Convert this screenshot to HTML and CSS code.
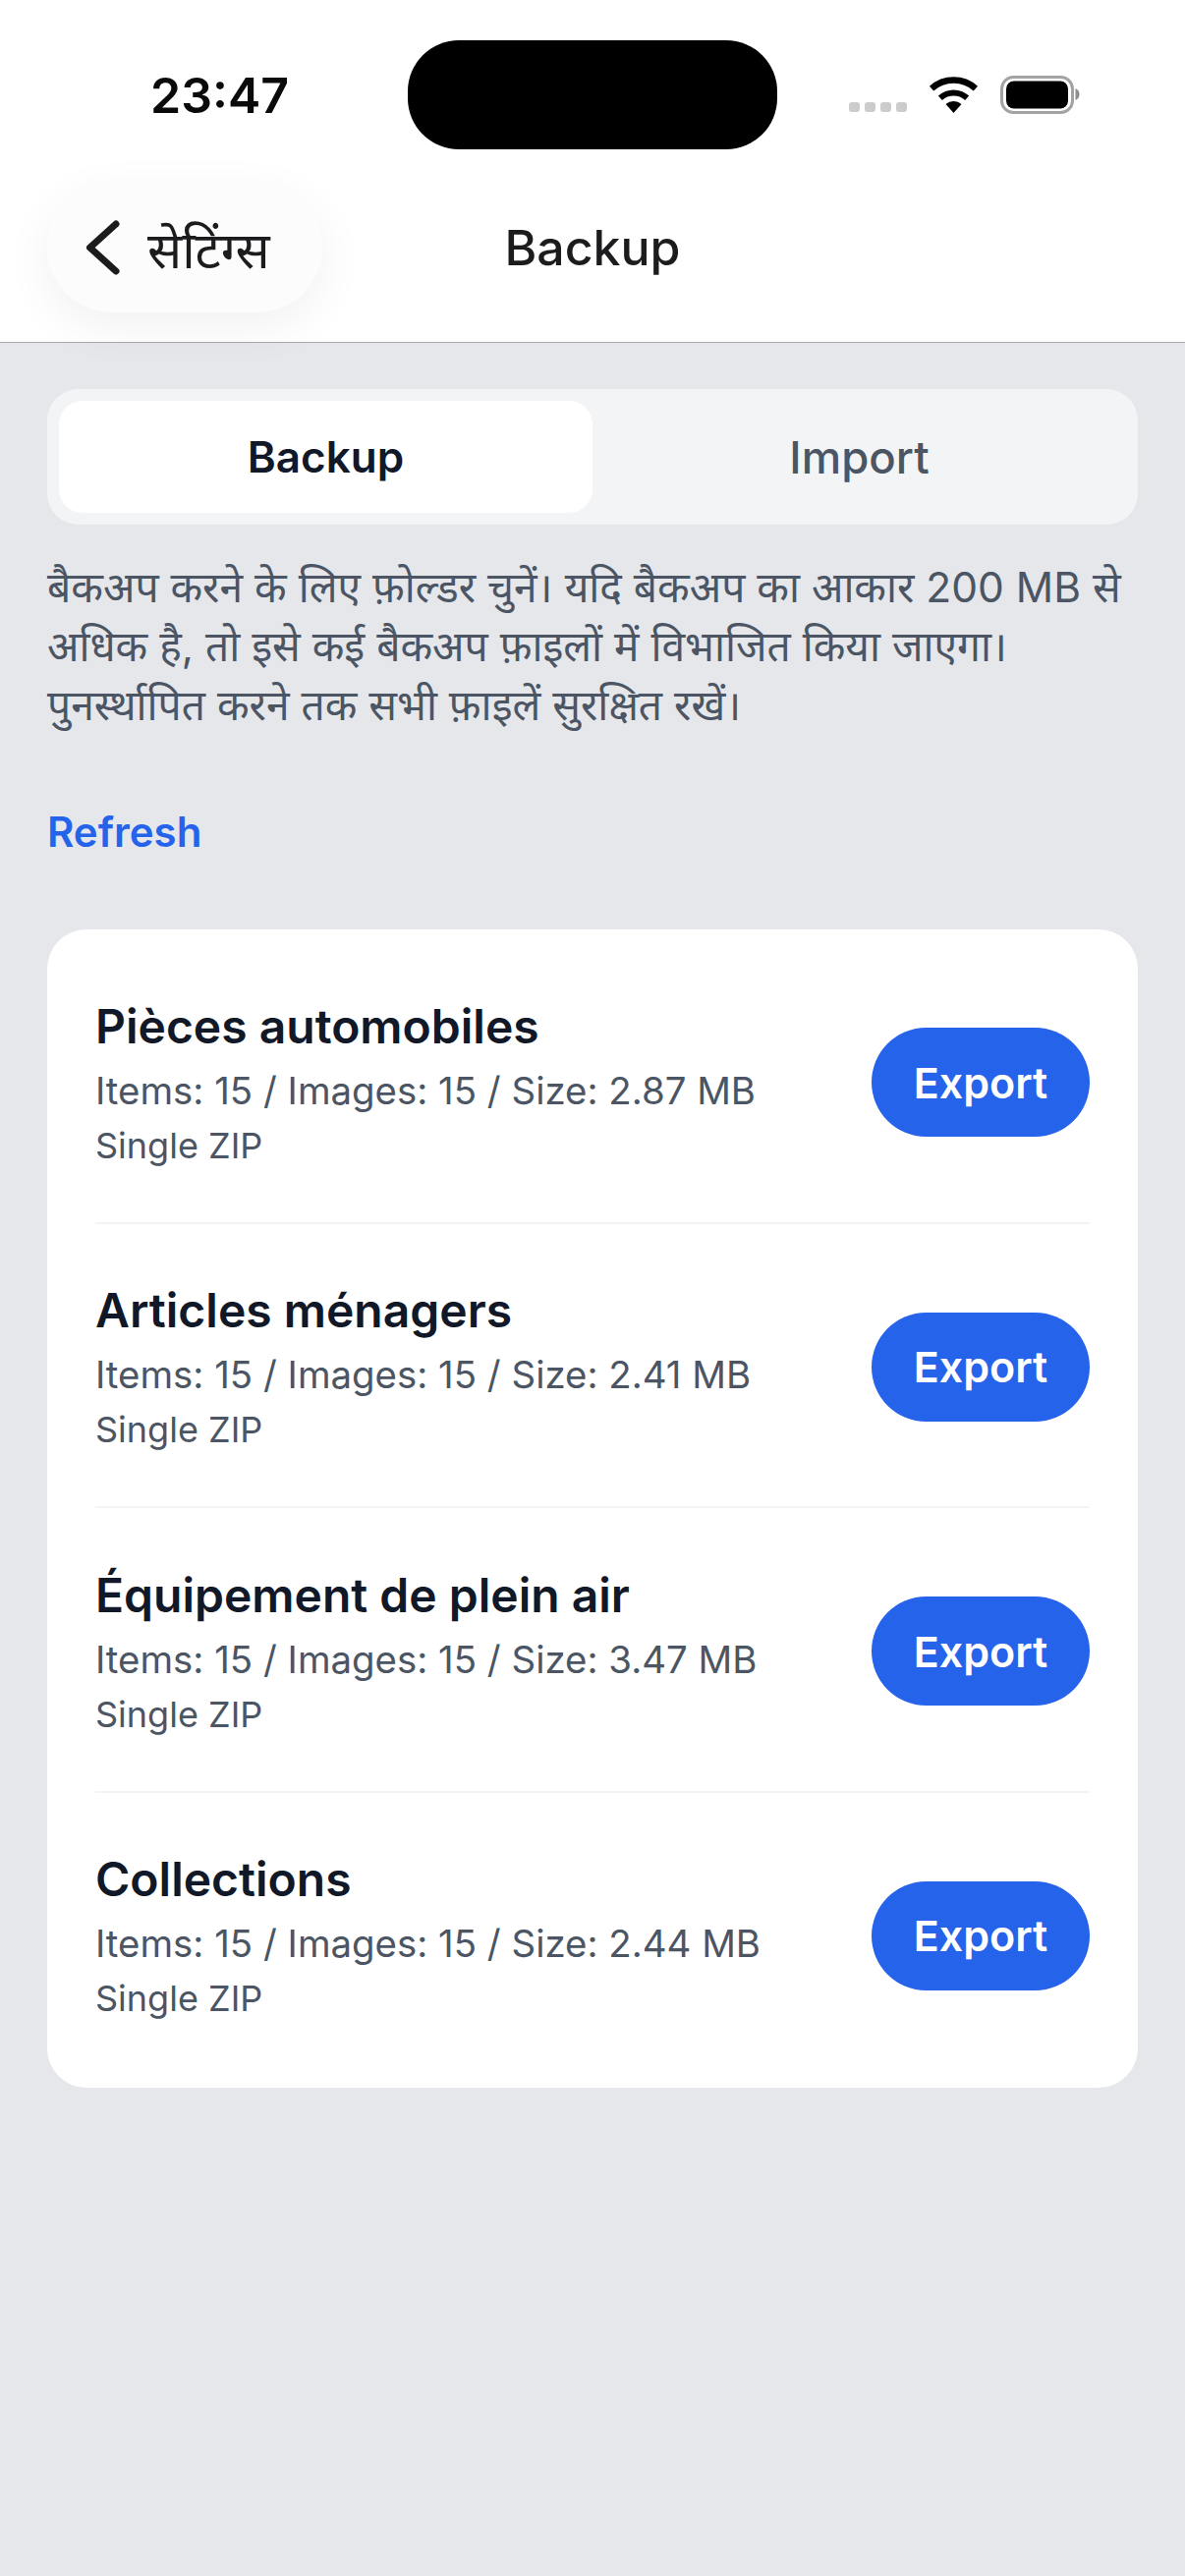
FILE: index.html
```html
<!DOCTYPE html>
<html lang="hi">
<head>
    <meta charset="UTF-8">
    <meta name="viewport" content="width=device-width, initial-scale=1.0">
    <title>Backup</title>
    <link rel="stylesheet" href="styles.css">
</head>
<body>
    <main>
        <header class="top">
            <div class="status-bar">
                <span class="time">23:47</span>
                <div class="island"></div>
                <div class="status-icons">
                    <div class="signal"><i></i><i></i><i></i><i></i></div>
                    <svg class="wifi" width="51" height="38" viewBox="0 0 51 38">
                        <path d="M3.1 12.1A33.5 33.5 0 0 1 47.9 12.1" fill="none" stroke="#000" stroke-width="6.5"/>
                        <path d="M11.85 21.8A20.4 20.4 0 0 1 39.15 21.8" fill="none" stroke="#000" stroke-width="6"/>
                        <path d="M25.5 37L17.5 28.1A12 12 0 0 1 33.5 28.1Z"/>
                    </svg>
                    <svg class="battery" width="82" height="39" viewBox="0 0 82 39">
                        <rect x="1.5" y="1.5" width="72" height="36" rx="12" fill="none" stroke="#a3a3a3" stroke-width="3"/>
                        <rect x="6" y="5.5" width="63" height="28" rx="8"/>
                        <path d="M76.5 13A6.5 6.5 0 0 1 76.5 25Z" fill="#8e8e8e"/>
                    </svg>
                </div>
            </div>
            <nav class="nav-bar">
                <button class="back">
                    <svg width="36" height="58" viewBox="0 0 36 58">
                        <path d="M30 5L3.5 29L30 53" fill="none" stroke="#1c1c1e" stroke-width="7" stroke-linecap="round" stroke-linejoin="round"/>
                    </svg>
                    <span>सेटिंग्स</span>
                </button>
                <h1>Backup</h1>
                <span></span>
            </nav>
        </header>

        <section class="content">
            <div class="tabs">
                <div class="tab active">Backup</div>
                <div class="tab">Import</div>
            </div>
            <p class="hint">बैकअप करने के लिए फ़ोल्डर चुनें। यदि बैकअप का आकार 200 MB से अधिक है, तो इसे कई बैकअप फ़ाइलों में विभाजित किया जाएगा। पुनर्स्थापित करने तक सभी फ़ाइलें सुरक्षित रखें।</p>
            <a class="refresh">Refresh</a>

            <div class="card">
                <div class="row">
                    <div class="info">
                        <h2>Pièces automobiles</h2>
                        <p class="meta">Items: 15 / Images: 15 / Size: 2.87 MB</p>
                        <p class="kind">Single ZIP</p>
                    </div>
                    <button class="export">Export</button>
                </div>
                <div class="row">
                    <div class="info">
                        <h2>Articles ménagers</h2>
                        <p class="meta">Items: 15 / Images: 15 / Size: 2.41 MB</p>
                        <p class="kind">Single ZIP</p>
                    </div>
                    <button class="export">Export</button>
                </div>
                <div class="row">
                    <div class="info">
                        <h2>Équipement de plein air</h2>
                        <p class="meta">Items: 15 / Images: 15 / Size: 3.47 MB</p>
                        <p class="kind">Single ZIP</p>
                    </div>
                    <button class="export">Export</button>
                </div>
                <div class="row">
                    <div class="info">
                        <h2>Collections</h2>
                        <p class="meta">Items: 15 / Images: 15 / Size: 2.44 MB</p>
                        <p class="kind">Single ZIP</p>
                    </div>
                    <button class="export">Export</button>
                </div>
            </div>
        </section>
    </main>
</body>
</html>
```
FILE: styles.css
```css
* {
    padding: 0;
    margin: 0;
    box-sizing: border-box;
    font-family: Inter, "Noto Sans", sans-serif;
}
body {
    background-color: #e5e7eb;
}
main {
    width: 1206px;
    height: 2622px;
    overflow: hidden;
    background-color: #e5e7eb;
    display: flex;
    flex-direction: column;
}

/* header */
.top {
    height: 349px;
    background-color: #fff;
    border-bottom: 1px solid #a8a8a8;
    padding-top: 41px;
}
.status-bar {
    height: 111px;
    position: relative;
    display: flex;
    justify-content: space-between;
    align-items: center;
    padding-left: 153px;
    padding-right: 106px;
}
.time {
    font-size: 50px;
    font-weight: 600;
    color: #0a0a0a;
}
.island {
    position: absolute;
    left: 415px;
    top: 0;
    width: 376px;
    height: 111px;
    background-color: #000;
    border-radius: 52px;
}
.status-icons {
    display: flex;
    align-items: flex-end;
    gap: 22px;
}
.signal {
    display: flex;
    gap: 5px;
    margin-bottom: 2px;
}
.signal i {
    width: 11px;
    height: 10px;
    border-radius: 3px;
    background-color: #ccc;
}
.nav-bar {
    margin-top: 34px;
    height: 132px;
    padding: 0 48px;
    display: grid;
    grid-template-columns: 1fr auto 1fr;
    align-items: center;
}
.back {
    width: 280px;
    height: 132px;
    border: none;
    border-radius: 66px;
    background-color: #fcfcfc;
    box-shadow: 0 14px 50px rgba(0, 0, 0, 0.06);
    display: flex;
    align-items: center;
    gap: 26px;
    padding-left: 40px;
}
.back span {
    font-size: 52px;
    color: #1c1c1e;
}
.nav-bar h1 {
    font-size: 50px;
    font-weight: 500;
    color: #1c1c1e;
}

/* content */
.content {
    padding: 47px 48px 0;
    display: flex;
    flex-direction: column;
}
.tabs {
    height: 138px;
    background-color: #f3f4f6;
    border-radius: 32px;
    padding: 12px;
    display: grid;
    grid-template-columns: 1fr 1fr;
}
.tab {
    display: flex;
    justify-content: center;
    align-items: center;
    font-size: 45.5px;
    font-weight: 500;
    color: #4b5563;
}
.tab.active {
    background-color: #fff;
    border-radius: 24px;
    font-size: 44px;
    font-weight: 600;
    color: #111827;
}
.hint {
    margin-top: 34px;
    font-size: 42.5px;
    line-height: 60px;
    color: #4b5563;
}
.refresh {
    margin-top: 69px;
    font-size: 42px;
    line-height: 60px;
    font-weight: 600;
    color: #2563eb;
}
.card {
    margin-top: 69px;
    background-color: #fff;
    border-radius: 40px;
    padding: 10px 49px 11px;
}
.row {
    height: 289.5px;
    padding-top: 4px;
    display: flex;
    justify-content: space-between;
    align-items: center;
    border-bottom: 2px solid #f3f4f6;
}
.row:last-child {
    border-bottom-color: transparent;
}
.info {
    padding-top: 5px;
}
.info h2 {
    font-size: 48px;
    line-height: 60px;
    font-weight: 600;
    color: #111827;
}
.meta {
    margin-top: 7px;
    font-size: 38.4px;
    line-height: 56px;
    color: #4b5563;
}
.kind {
    font-size: 36px;
    line-height: 56px;
    color: #4b5563;
}
.export {
    width: 222px;
    height: 111px;
    border: none;
    border-radius: 56px;
    background-color: #2563eb;
    color: #fff;
    font-size: 43px;
    font-weight: 600;
}
```
